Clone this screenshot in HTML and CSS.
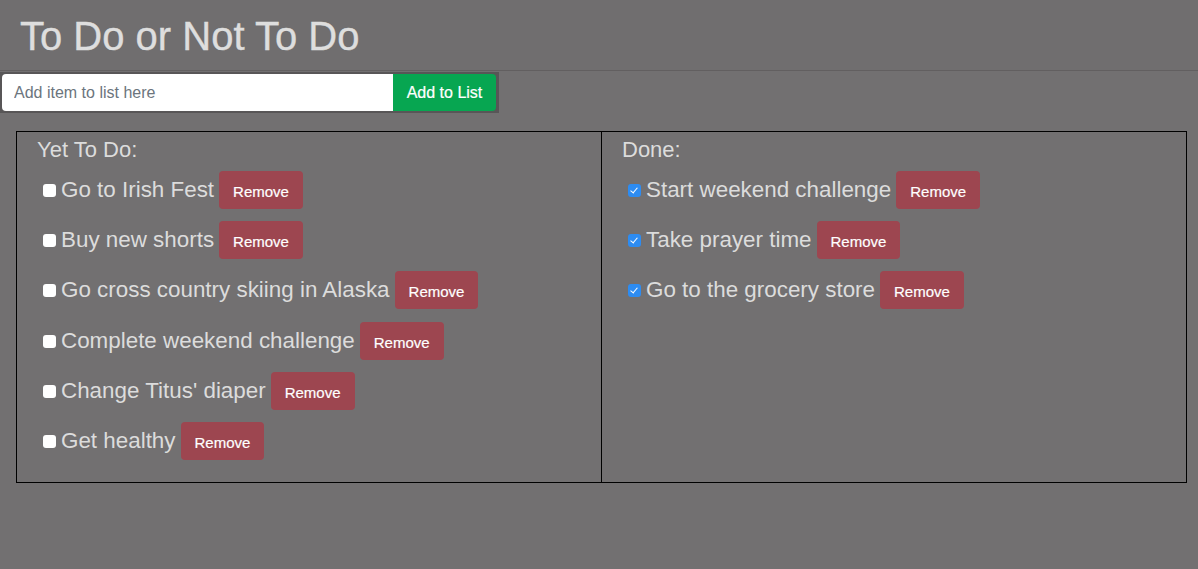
FILE: index.html
```html
<!DOCTYPE html>
<html lang="en">
<head>
<meta charset="utf-8">
<title>To Do or Not To Do</title>
<link rel="stylesheet" href="styles.css">
</head>
<body>
<header class="page-header">
  <h1 class="title">To Do or Not To Do</h1>
</header>
<form class="add-form">
  <input class="add-input" type="text" placeholder="Add item to list here">
  <button class="add-btn" type="button">Add to List</button>
</form>
<main class="board">
  <section class="column column-left">
    <h2 class="column-title">Yet To Do:</h2>
    <ul class="items">
      <li class="item"><input class="check" type="checkbox"><span class="item-text">Go to Irish Fest</span><button class="remove" type="button">Remove</button></li>
      <li class="item"><input class="check" type="checkbox"><span class="item-text">Buy new shorts</span><button class="remove" type="button">Remove</button></li>
      <li class="item"><input class="check" type="checkbox"><span class="item-text">Go cross country skiing in Alaska</span><button class="remove" type="button">Remove</button></li>
      <li class="item"><input class="check" type="checkbox"><span class="item-text">Complete weekend challenge</span><button class="remove" type="button">Remove</button></li>
      <li class="item"><input class="check" type="checkbox"><span class="item-text">Change Titus' diaper</span><button class="remove" type="button">Remove</button></li>
      <li class="item"><input class="check" type="checkbox"><span class="item-text">Get healthy</span><button class="remove" type="button">Remove</button></li>
    </ul>
  </section>
  <section class="column">
    <h2 class="column-title">Done:</h2>
    <ul class="items">
      <li class="item"><input class="check" type="checkbox" checked><span class="item-text">Start weekend challenge</span><button class="remove" type="button">Remove</button></li>
      <li class="item"><input class="check" type="checkbox" checked><span class="item-text">Take prayer time</span><button class="remove" type="button">Remove</button></li>
      <li class="item"><input class="check" type="checkbox" checked><span class="item-text">Go to the grocery store</span><button class="remove" type="button">Remove</button></li>
    </ul>
  </section>
</main>
</body>
</html>
```
FILE: styles.css
```css
* { box-sizing: border-box; }

html, body {
  margin: 0;
  padding: 0;
  background: #727071;
  font-family: "Liberation Sans", Arial, Helvetica, sans-serif;
  color: #dcdcdc;
}

.page-header {
  height: 71px;
  padding: 12px 0 0 20px;
  border-bottom: 1px solid #625f60;
  background: #706e6f;
}

.title {
  margin: 0;
  font-size: 40px;
  line-height: 48px;
  font-weight: 400;
  color: #dedede;
  -webkit-text-stroke: 0.4px #dedede;
}

.add-form {
  display: flex;
  width: 499px;
  height: 41px;
  margin: 1px 0 0 0;
  border: 2px solid #585657;
  border-right-width: 3px;
  background: #585657;
}

.add-input {
  flex: 0 0 391px;
  height: 100%;
  margin: 0;
  padding: 0 12px;
  border: none;
  border-radius: 4px 0 0 4px;
  background: #fff;
  font-family: "Liberation Sans", Arial, sans-serif;
  font-size: 16px;
  color: #495057;
  outline: none;
}

.add-input::placeholder { color: #6c757d; }

.add-btn {
  flex: 1;
  height: 100%;
  margin: 0;
  padding: 0 12px;
  border: none;
  border-radius: 0 4px 4px 0;
  background: #07a651;
  color: #fff;
  font-family: "Liberation Sans", Arial, sans-serif;
  font-size: 16px;
  -webkit-text-stroke: 0.2px #fff;
}

.board {
  display: grid;
  grid-template-columns: 585px 1fr;
  width: 1171px;
  margin: 18px 0 0 16px;
  border: 1px solid #000;
}

.column {
  padding: 5px 20px 10px 20px;
}

.column-left {
  border-right: 1px solid #000;
}

.column-title {
  margin: 0 0 9px 0;
  font-size: 22px;
  line-height: 25px;
  font-weight: 400;
  color: #dcdcdc;
}

.items {
  list-style: none;
  margin: 0;
  padding: 0 0 0 6px;
}

.item {
  display: flex;
  align-items: baseline;
  margin-bottom: 12.2px;
}

.check {
  appearance: none;
  -webkit-appearance: none;
  position: relative;
  flex: 0 0 13px;
  width: 13px;
  height: 13px;
  margin: 0 5px 0 0;
  border-radius: 3px;
  background: #fff;
}

.check:checked {
  background: #2d8cf2;
}

.check:checked::after {
  content: "";
  position: absolute;
  left: 4px;
  top: 2px;
  width: 3px;
  height: 6px;
  border: solid #fff;
  border-width: 0 1.5px 1.5px 0;
  transform: rotate(40deg);
}

.item-text {
  font-size: 22.4px;
  color: #dcdcdc;
}

.remove {
  margin-left: 5px;
  height: 38px;
  padding: 13px 14px 9px 14px;
  border: none;
  border-radius: 4px;
  background: #9d4650;
  color: #fff;
  font-family: "Liberation Sans", Arial, sans-serif;
  font-size: 15px;
  line-height: 16px;
  -webkit-text-stroke: 0.2px #fff;
}
```
